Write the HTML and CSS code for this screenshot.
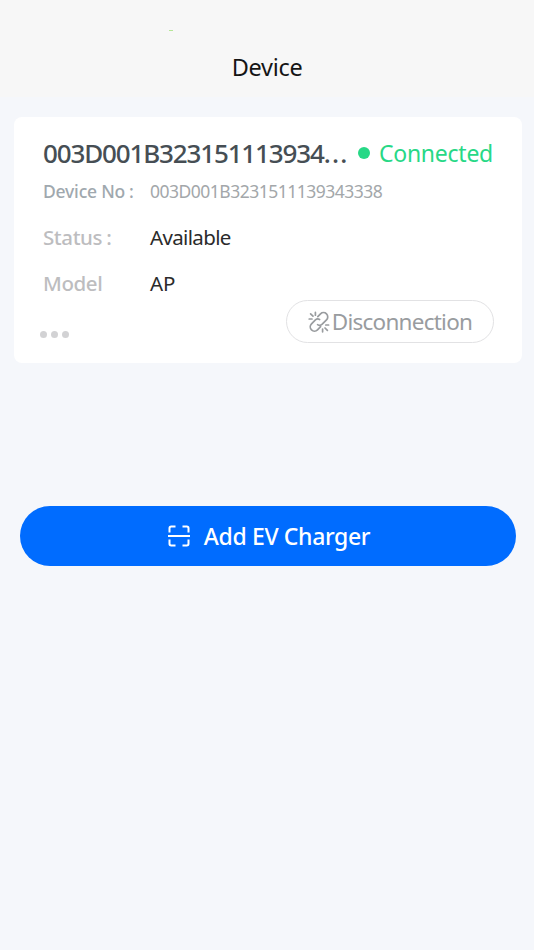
FILE: index.html
```html
<!DOCTYPE html>
<html lang="en">
<head>
  <meta charset="UTF-8" />
  <meta name="viewport" content="width=device-width, initial-scale=1.0"/>
  <title>Device</title>
  <link rel="stylesheet" href="styles.css">
</head>
<body>

  <header>
    <span class="status-mark"></span>
    <h1>Device</h1>
  </header>

  <main>
    <!-- Charger card -->
    <section class="card">
      <div class="card-head">
        <h2>003D001B323151113934<span class="dots">...</span></h2>
        <div class="state"><span class="state-dot"></span><span class="state-text">Connected</span></div>
      </div>

      <div class="row row-number">
        <span class="label">Device No<span class="colon">:</span></span>
        <span class="value">003D001B3231511139343338</span>
      </div>
      <div class="row">
        <span class="label">Status<span class="colon">:</span></span>
        <span class="value">Available</span>
      </div>
      <div class="row">
        <span class="label">Model</span>
        <span class="value value-model">AP</span>
      </div>

      <div class="card-foot">
        <div class="more"><i></i><i></i><i></i></div>
        <button class="disconnect">
          <svg width="22" height="22" viewBox="0 0 22 22" fill="none" stroke="currentColor" stroke-width="1.7" stroke-linecap="round">
            <path d="M9.8 5.6l2.7-2.7a4.2 4.2 0 0 1 6 6l-4.3 4.3a3.7 3.7 0 0 1-4.6.4"/>
            <path d="M12.6 15.7l-3.1 3.1a4.2 4.2 0 0 1-6-6l3.9-3.9q2-1.6 4.2-.4"/>
            <path d="M7.4 1.4v2.8M2.6 2.8l2.4 2.4M1.2 8h2.8M14.6 18v2.8M17 17l2.4 2.4M17.8 14h2.8"/>
          </svg>
          <span>Disconnection</span>
        </button>
      </div>
    </section>

    <button class="add">
      <svg width="22" height="22" viewBox="0 0 22 22" fill="none" stroke="currentColor" stroke-width="2">
        <path d="M1.5 7.5V3.2Q1.5 1.5 3.2 1.5H7.5M14.5 1.5h4.3q1.7 0 1.7 1.7v4.3M20.5 14.5v4.3q0 1.7-1.7 1.7h-4.3M7.5 20.5H3.2q-1.7 0-1.7-1.7v-4.3M0 11h22"/>
      </svg>
      <span>Add EV Charger</span>
    </button>
  </main>

</body>
</html>
```
FILE: styles.css
```css
* {
  box-sizing: border-box;
}

body {
  margin: 0;
  min-height: 950px;
  background: #f5f7fb;
  color: #2b2b2b;
  font-family: "Noto Sans", sans-serif;
}

header {
  position: relative;
  height: 97px;
  padding-top: 51px;
  background: #f7f7f7;
  text-align: center;
}

.status-mark {
  position: absolute;
  left: 169px;
  top: 30px;
  width: 4px;
  height: 1px;
  background: #b5e696;
}

h1, h2 {
  margin: 0;
}

h1 {
  font-size: 23.5px;
  line-height: 32px;
  font-weight: 400;
  letter-spacing: -0.3px;
  color: #151515;
}

main {
  padding: 20px 12px 0 14px;
}

.card {
  height: 246px;
  padding: 18px 29px 0;
  border-radius: 8px;
  background: #fff;
}

.card-head {
  display: flex;
  justify-content: space-between;
  align-items: center;
  height: 36px;
  white-space: nowrap;
}

h2 {
  font-size: 26px;
  line-height: 36px;
  font-weight: 500;
  letter-spacing: -1.15px;
  color: #464e54;
}

.dots {
  letter-spacing: 1.2px;
}

.state {
  display: flex;
  align-items: center;
  gap: 9px;
  color: #27d886;
  font-size: 23px;
  line-height: 36px;
}

.state-text {
  letter-spacing: -0.25px;
}

.state-dot {
  width: 12px;
  height: 12px;
  border-radius: 50%;
  background: #27d886;
}

.row {
  display: flex;
  align-items: center;
  height: 46px;
  font-size: 20.5px;
  white-space: nowrap;
}

.label {
  width: 107px;
  color: #bdbdbf;
  font-weight: 500;
  letter-spacing: -0.4px;
}

.value {
  letter-spacing: -0.65px;
}

.value-model {
  letter-spacing: 0;
}

.colon {
  margin-left: 4px;
}

.row-number {
  height: 40px;
  margin-bottom: 3px;
  font-size: 17.5px;
}

.row-number .label {
  color: #a0a8ae;
  letter-spacing: -0.2px;
}

.row-number .value {
  color: #a3a7aa;
  letter-spacing: -0.5px;
}

.card-foot {
  display: flex;
  justify-content: space-between;
  margin-right: -1px;
  margin-top: -6px;
}

.more {
  display: flex;
  gap: 4px;
  margin: 31px 0 0 -3px;
}

.more i {
  width: 7px;
  height: 7px;
  border-radius: 50%;
  background: #d2d2d4;
}

button {
  display: flex;
  align-items: center;
  justify-content: center;
  padding: 0;
  font-family: inherit;
  white-space: nowrap;
  cursor: pointer;
}

.disconnect {
  gap: 2px;
  width: 208px;
  height: 43px;
  border: 1px solid #e2e2e4;
  border-radius: 22px;
  background: #fff;
  color: #999c9f;
  font-size: 22.5px;
  letter-spacing: -0.75px;
}

.add {
  gap: 14px;
  width: 496px;
  height: 60px;
  margin: 143px 0 0 6px;
  padding-left: 2px;
  border: 0;
  border-radius: 30px;
  background: #006cff;
  color: #fff;
  font-size: 23px;
  font-weight: 500;
  letter-spacing: -0.35px;
}
```
